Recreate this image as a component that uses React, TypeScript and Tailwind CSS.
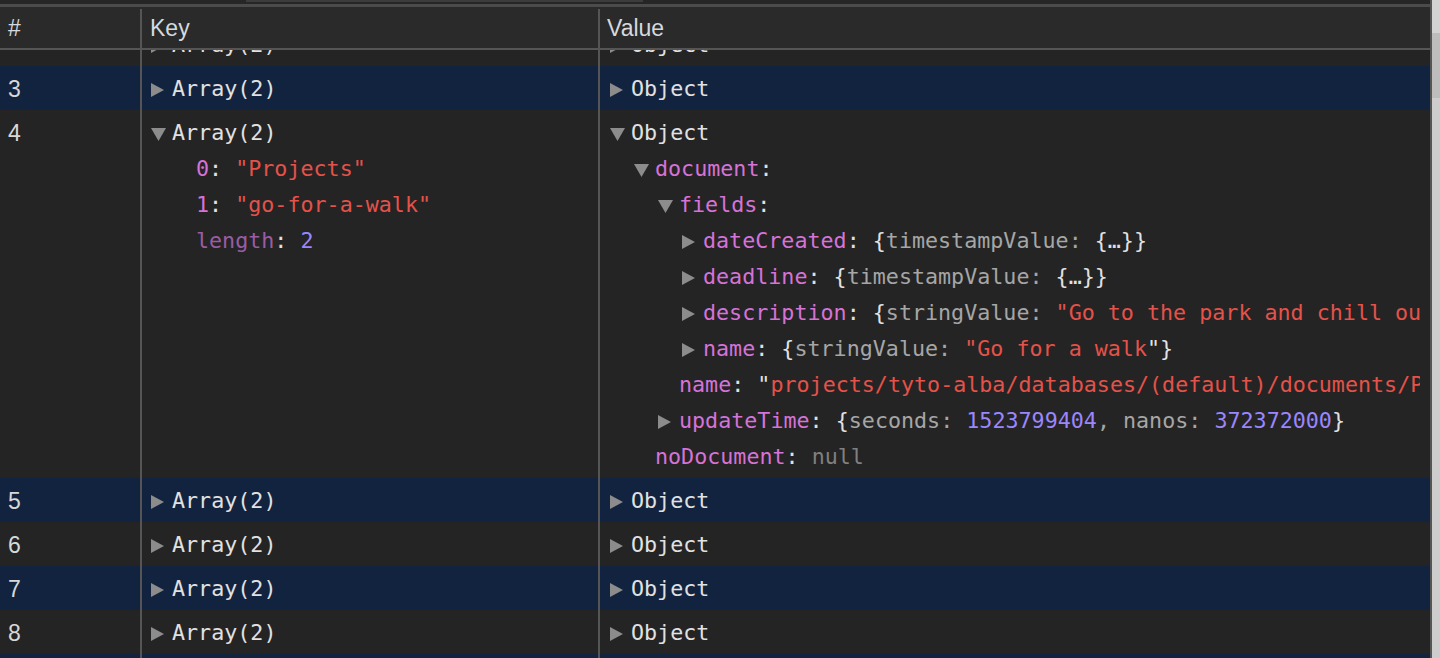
import type { ReactNode } from "react";

const mono = "font-['DejaVu_Sans_Mono','Liberation_Mono',monospace] text-[21.7px]";
const sans = "font-['Liberation_Sans',Arial,sans-serif] text-[23px]";

const indent = ["pl-0", "pl-6", "pl-12", "pl-18"];

function Arrow({ dir }: { dir?: "right" | "down" }) {
  return (
    <span className="flex w-[21px] shrink-0 items-center">
      {dir === "right" && (
        <svg width="13" height="14" viewBox="0 0 13 14" className="mt-[2px]">
          <polygon points="0,0 13,7 0,14" fill="#8c8c8c" />
        </svg>
      )}
      {dir === "down" && (
        <svg width="15" height="13" viewBox="0 0 15 13" className="mt-[3px]">
          <polygon points="0,0 15,0 7.5,13" fill="#8c8c8c" />
        </svg>
      )}
    </span>
  );
}

function Line({ depth = 0, dir, children }: { depth?: number; dir?: "right" | "down"; children: ReactNode }) {
  return (
    <div className={`flex h-9 items-center whitespace-nowrap ${indent[depth]}`}>
      <Arrow dir={dir} />
      <span className="text-[#e1e1e1]">{children}</span>
    </div>
  );
}

const K = ({ children }: { children: ReactNode }) => <span className="text-[#d672d8]">{children}</span>;
const S = ({ children }: { children: ReactNode }) => <span className="text-[#e4524a]">{children}</span>;
const N = ({ children }: { children: ReactNode }) => <span className="text-[#9a86fd]">{children}</span>;
const G = ({ children }: { children: ReactNode }) => <span className="text-[#a6a6a6]">{children}</span>;

function Row({ n, navy, keys, values }: { n: ReactNode; navy: boolean; keys: ReactNode; values: ReactNode }) {
  return (
    <div className={`flex ${navy ? "bg-[#12233f]" : "bg-[#242424]"}`}>
      <div className={`w-[142px] shrink-0 border-r-2 border-[#555] pt-[5px] pb-[3px] pl-2 text-[#d8d8d8] ${sans}`}>
        <div className="flex h-9 items-center">{n}</div>
      </div>
      <div className={`w-[458px] shrink-0 overflow-hidden border-r-2 border-[#555] pt-[5px] pb-[3px] pl-[9px] ${mono}`}>
        {keys}
      </div>
      <div className={`min-w-0 flex-1 pt-[5px] pb-[3px] pl-[10px] pr-[10px] ${mono}`}>
        <div className="overflow-hidden">{values}</div>
      </div>
    </div>
  );
}

const collapsed = [3, 5, 6, 7, 8, 9];

export default function App() {
  return (
    <div className="flex h-[658px] w-[1440px] overflow-hidden bg-[#242424]">
      <div className="flex min-w-0 flex-1 flex-col border-r-2 border-[#555]">
        {/* top strip */}
        <div className="h-1 bg-[#262626] pl-[246px]">
          <div className="h-[2px] w-[397px] bg-[#3c3c3c]" />
        </div>
        <div className="h-[3px] bg-[#4b4b4b]" />

        {/* header */}
        <div className={`flex h-[43px] border-b-2 border-[#555] bg-[#2a2a2a] pt-[2px] text-[#d5d9df] ${sans}`}>
          <div className="flex w-[142px] shrink-0 items-center border-r-2 border-[#555] pl-2">#</div>
          <div className="flex w-[458px] shrink-0 items-center border-r-2 border-[#555] pl-2">Key</div>
          <div className="flex flex-1 items-center pl-[7px]">Value</div>
        </div>

        {/* body, scrolled a little: row 2 is mostly hidden under the header */}
        <div className="min-h-0 flex-1 overflow-hidden">
          <div className="mt-[-28px]">
            <Row
              n=""
              navy={false}
              keys={<Line dir="right">Array(2)</Line>}
              values={<Line dir="right">Object</Line>}
            />
            <Row
              n={collapsed[0]}
              navy
              keys={<Line dir="right">Array(2)</Line>}
              values={<Line dir="right">Object</Line>}
            />

            <Row
              n={4}
              navy={false}
              keys={
                <>
                  <Line dir="down">Array(2)</Line>
                  <Line depth={1}>
                    <K>0</K>: <S>"Projects"</S>
                  </Line>
                  <Line depth={1}>
                    <K>1</K>: <S>"go-for-a-walk"</S>
                  </Line>
                  <Line depth={1}>
                    <span className="text-[#9a5ca5]">length</span>: <N>2</N>
                  </Line>
                </>
              }
              values={
                <>
                  <Line dir="down">Object</Line>
                  <Line depth={1} dir="down">
                    <K>document</K>:
                  </Line>
                  <Line depth={2} dir="down">
                    <K>fields</K>:
                  </Line>
                  <Line depth={3} dir="right">
                    <K>dateCreated</K>: {"{"}
                    <G>timestampValue:</G> {"{…}}"}
                  </Line>
                  <Line depth={3} dir="right">
                    <K>deadline</K>: {"{"}
                    <G>timestampValue:</G> {"{…}}"}
                  </Line>
                  <Line depth={3} dir="right">
                    <K>description</K>: {"{"}
                    <G>stringValue:</G> <S>"Go to the park and chill out"</S>
                    {"}"}
                  </Line>
                  <Line depth={3} dir="right">
                    <K>name</K>: {"{"}
                    <G>stringValue:</G> <S>"Go for a walk</S>"{"}"}
                  </Line>
                  <Line depth={2}>
                    <K>name</K>: "<S>projects/tyto-alba/databases/(default)/documents/Projects/go-for-a-walk</S>"
                  </Line>
                  <Line depth={2} dir="right">
                    <K>updateTime</K>: {"{"}
                    <G>seconds:</G> <N>1523799404</N>
                    <G>, nanos:</G> <N>372372000</N>
                    {"}"}
                  </Line>
                  <Line depth={1}>
                    <K>noDocument</K>: <span className="text-[#808080]">null</span>
                  </Line>
                </>
              }
            />

            {collapsed.slice(1).map((n) => (
              <Row
                key={n}
                n={n}
                navy={n % 2 === 1}
                keys={<Line dir="right">Array(2)</Line>}
                values={<Line dir="right">Object</Line>}
              />
            ))}
          </div>
        </div>
      </div>

      {/* window scrollbar */}
      <div className="flex w-2 shrink-0 flex-col bg-[#cdcdcd]">
        <div className="h-[33px] bg-[#d3d3d3]" />
        <div className="h-[65px] bg-[#bdbdbd]" />
      </div>
    </div>
  );
}
